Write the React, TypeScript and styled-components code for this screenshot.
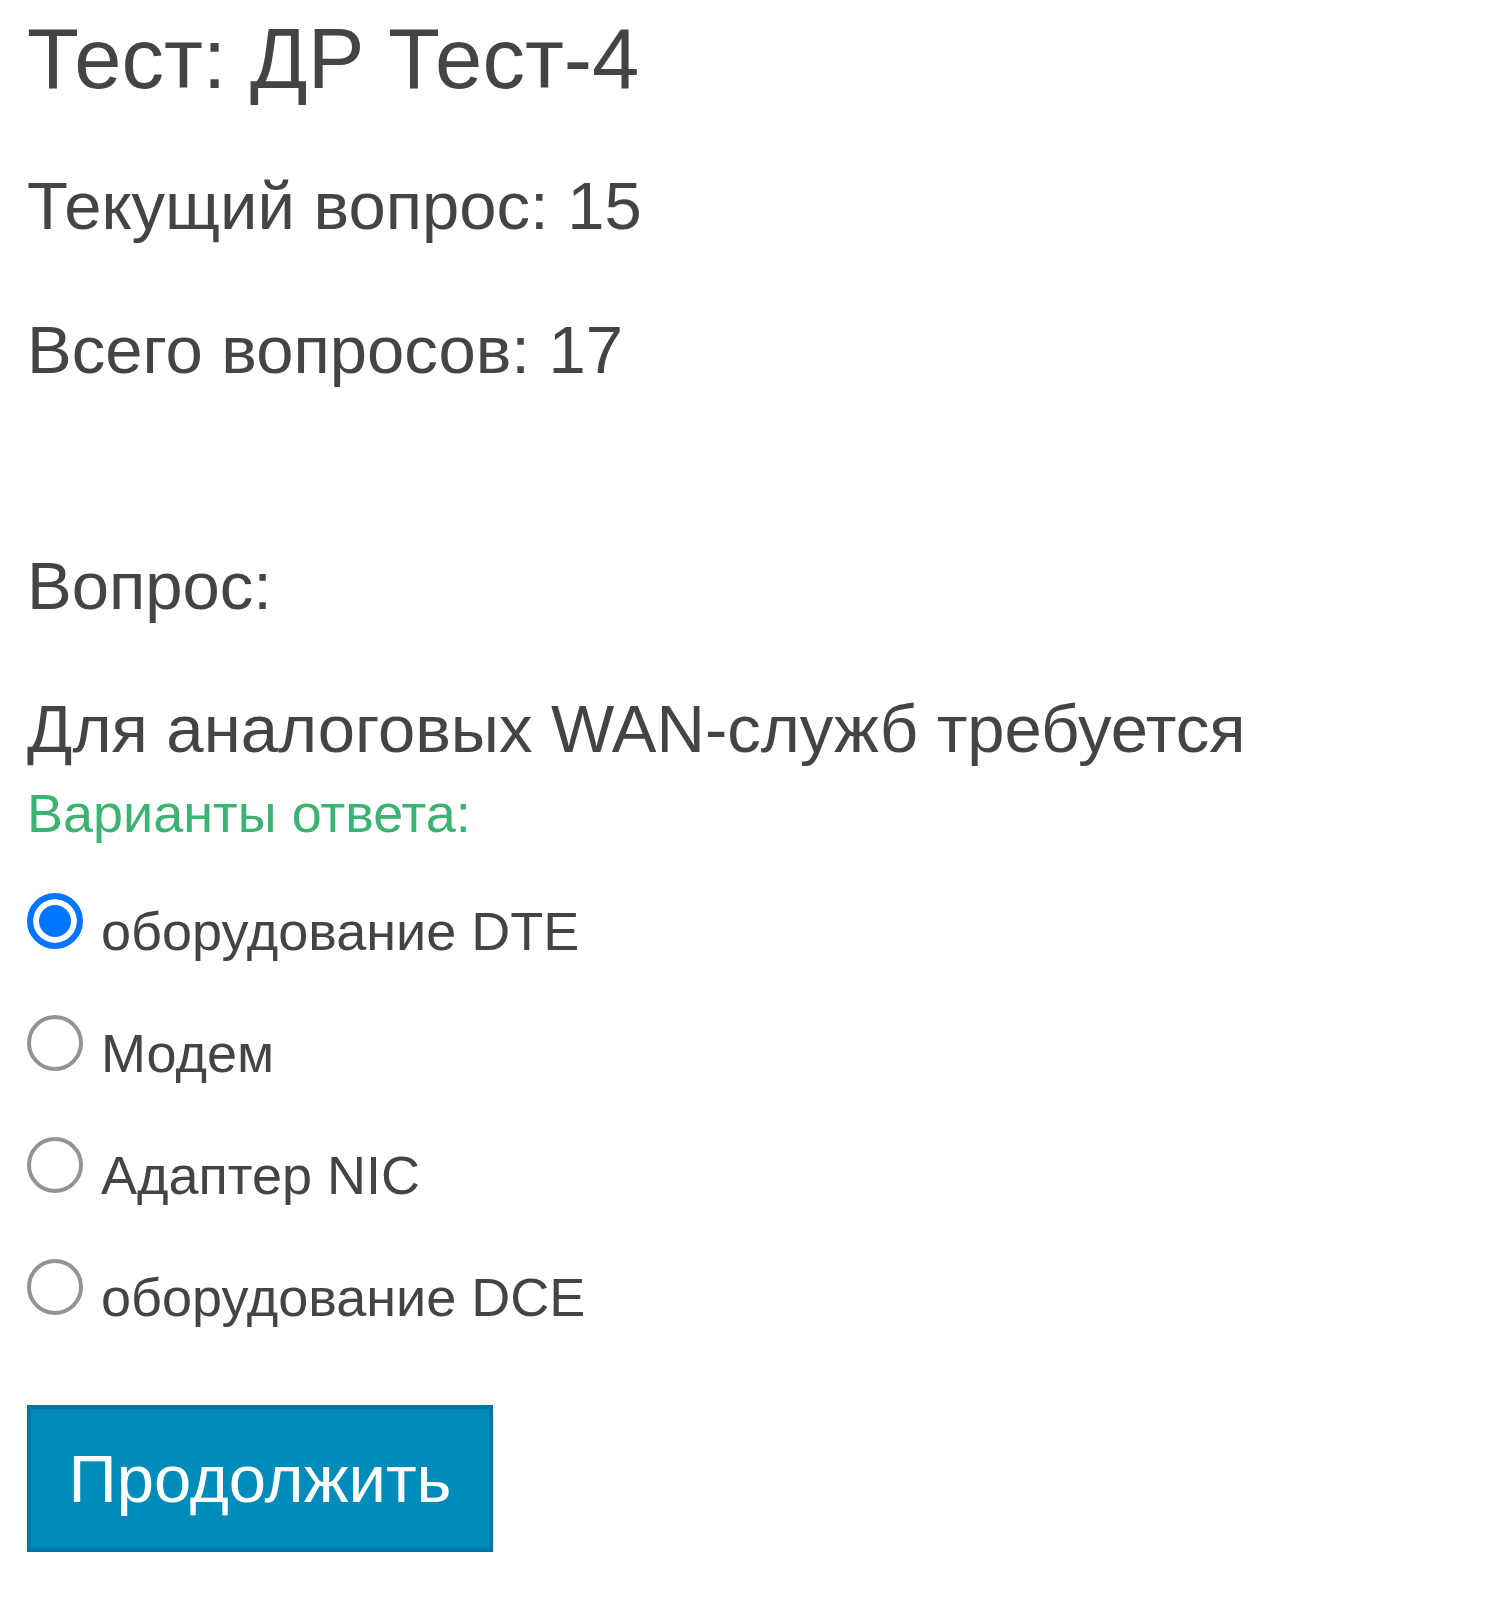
import React from 'react';
import styled, { createGlobalStyle } from 'styled-components';

const GlobalStyle = createGlobalStyle`
  body {
    margin: 0;
    background: #fff;
    font-family: "Liberation Sans", Arial, sans-serif;
    color: #444;
  }
`;

const Page = styled.div`
  display: flex;
  flex-direction: column;
  align-items: flex-start;
  padding: 9px 0 40px 27px;
`;

const Title = styled.h2`
  margin: 0;
  font-size: 85px;
  line-height: 100px;
  font-weight: normal;
`;

const Info = styled.p<{ $gap: number }>`
  margin: ${(p) => p.$gap}px 0 0;
  font-size: 67px;
  line-height: 80px;
`;

const Hint = styled.div`
  margin-top: 14px;
  font-size: 54px;
  line-height: 60px;
  color: #3cb371;
`;

const Options = styled.div`
  display: flex;
  flex-direction: column;
  gap: 52px;
  margin-top: 53px;
`;

const Option = styled.label`
  display: flex;
  align-items: flex-start;
  gap: 18px;
  font-size: 54px;
  line-height: 70px;
  cursor: pointer;
`;

const Radio = styled.input`
  appearance: none;
  box-sizing: border-box;
  width: 56px;
  height: 56px;
  margin: -3px 0 0;
  border-radius: 50%;
  border: 4px solid #939393;
  background: #fff;
  flex-shrink: 0;

  &:checked {
    border: 6px solid #0075ff;
    background: #0075ff;
    box-shadow: inset 0 0 0 6px #fff;
  }
`;

const Button = styled.button`
  margin-top: 73px;
  width: 466px;
  height: 147px;
  box-sizing: border-box;
  border: 4px solid #0077a0;
  background: #008cba;
  color: #fff;
  font-family: "Liberation Sans", Arial, sans-serif;
  font-size: 67px;
  padding: 0;
  cursor: pointer;
`;

const answers = ['оборудование DTE', 'Модем', 'Адаптер NIC', 'оборудование DCE'];

export default function App() {
  const [picked, setPicked] = React.useState(0);

  return (
    <>
      <GlobalStyle />
      <Page>
        <Title>Тест: ДР Тест-4</Title>
        <Info $gap={57}>Текущий вопрос: 15</Info>
        <Info $gap={64}>Всего вопросов: 17</Info>
        <Info $gap={156}>Вопрос:</Info>
        <Info $gap={63}>Для аналоговых WAN-служб требуется</Info>
        <Hint>Варианты ответа:</Hint>
        <Options>
          {answers.map((a, i) => (
            <Option key={a}>
              <Radio
                type="radio"
                name="answer"
                checked={picked === i}
                onChange={() => setPicked(i)}
              />
              {a}
            </Option>
          ))}
        </Options>
        <Button>Продолжить</Button>
      </Page>
    </>
  );
}
